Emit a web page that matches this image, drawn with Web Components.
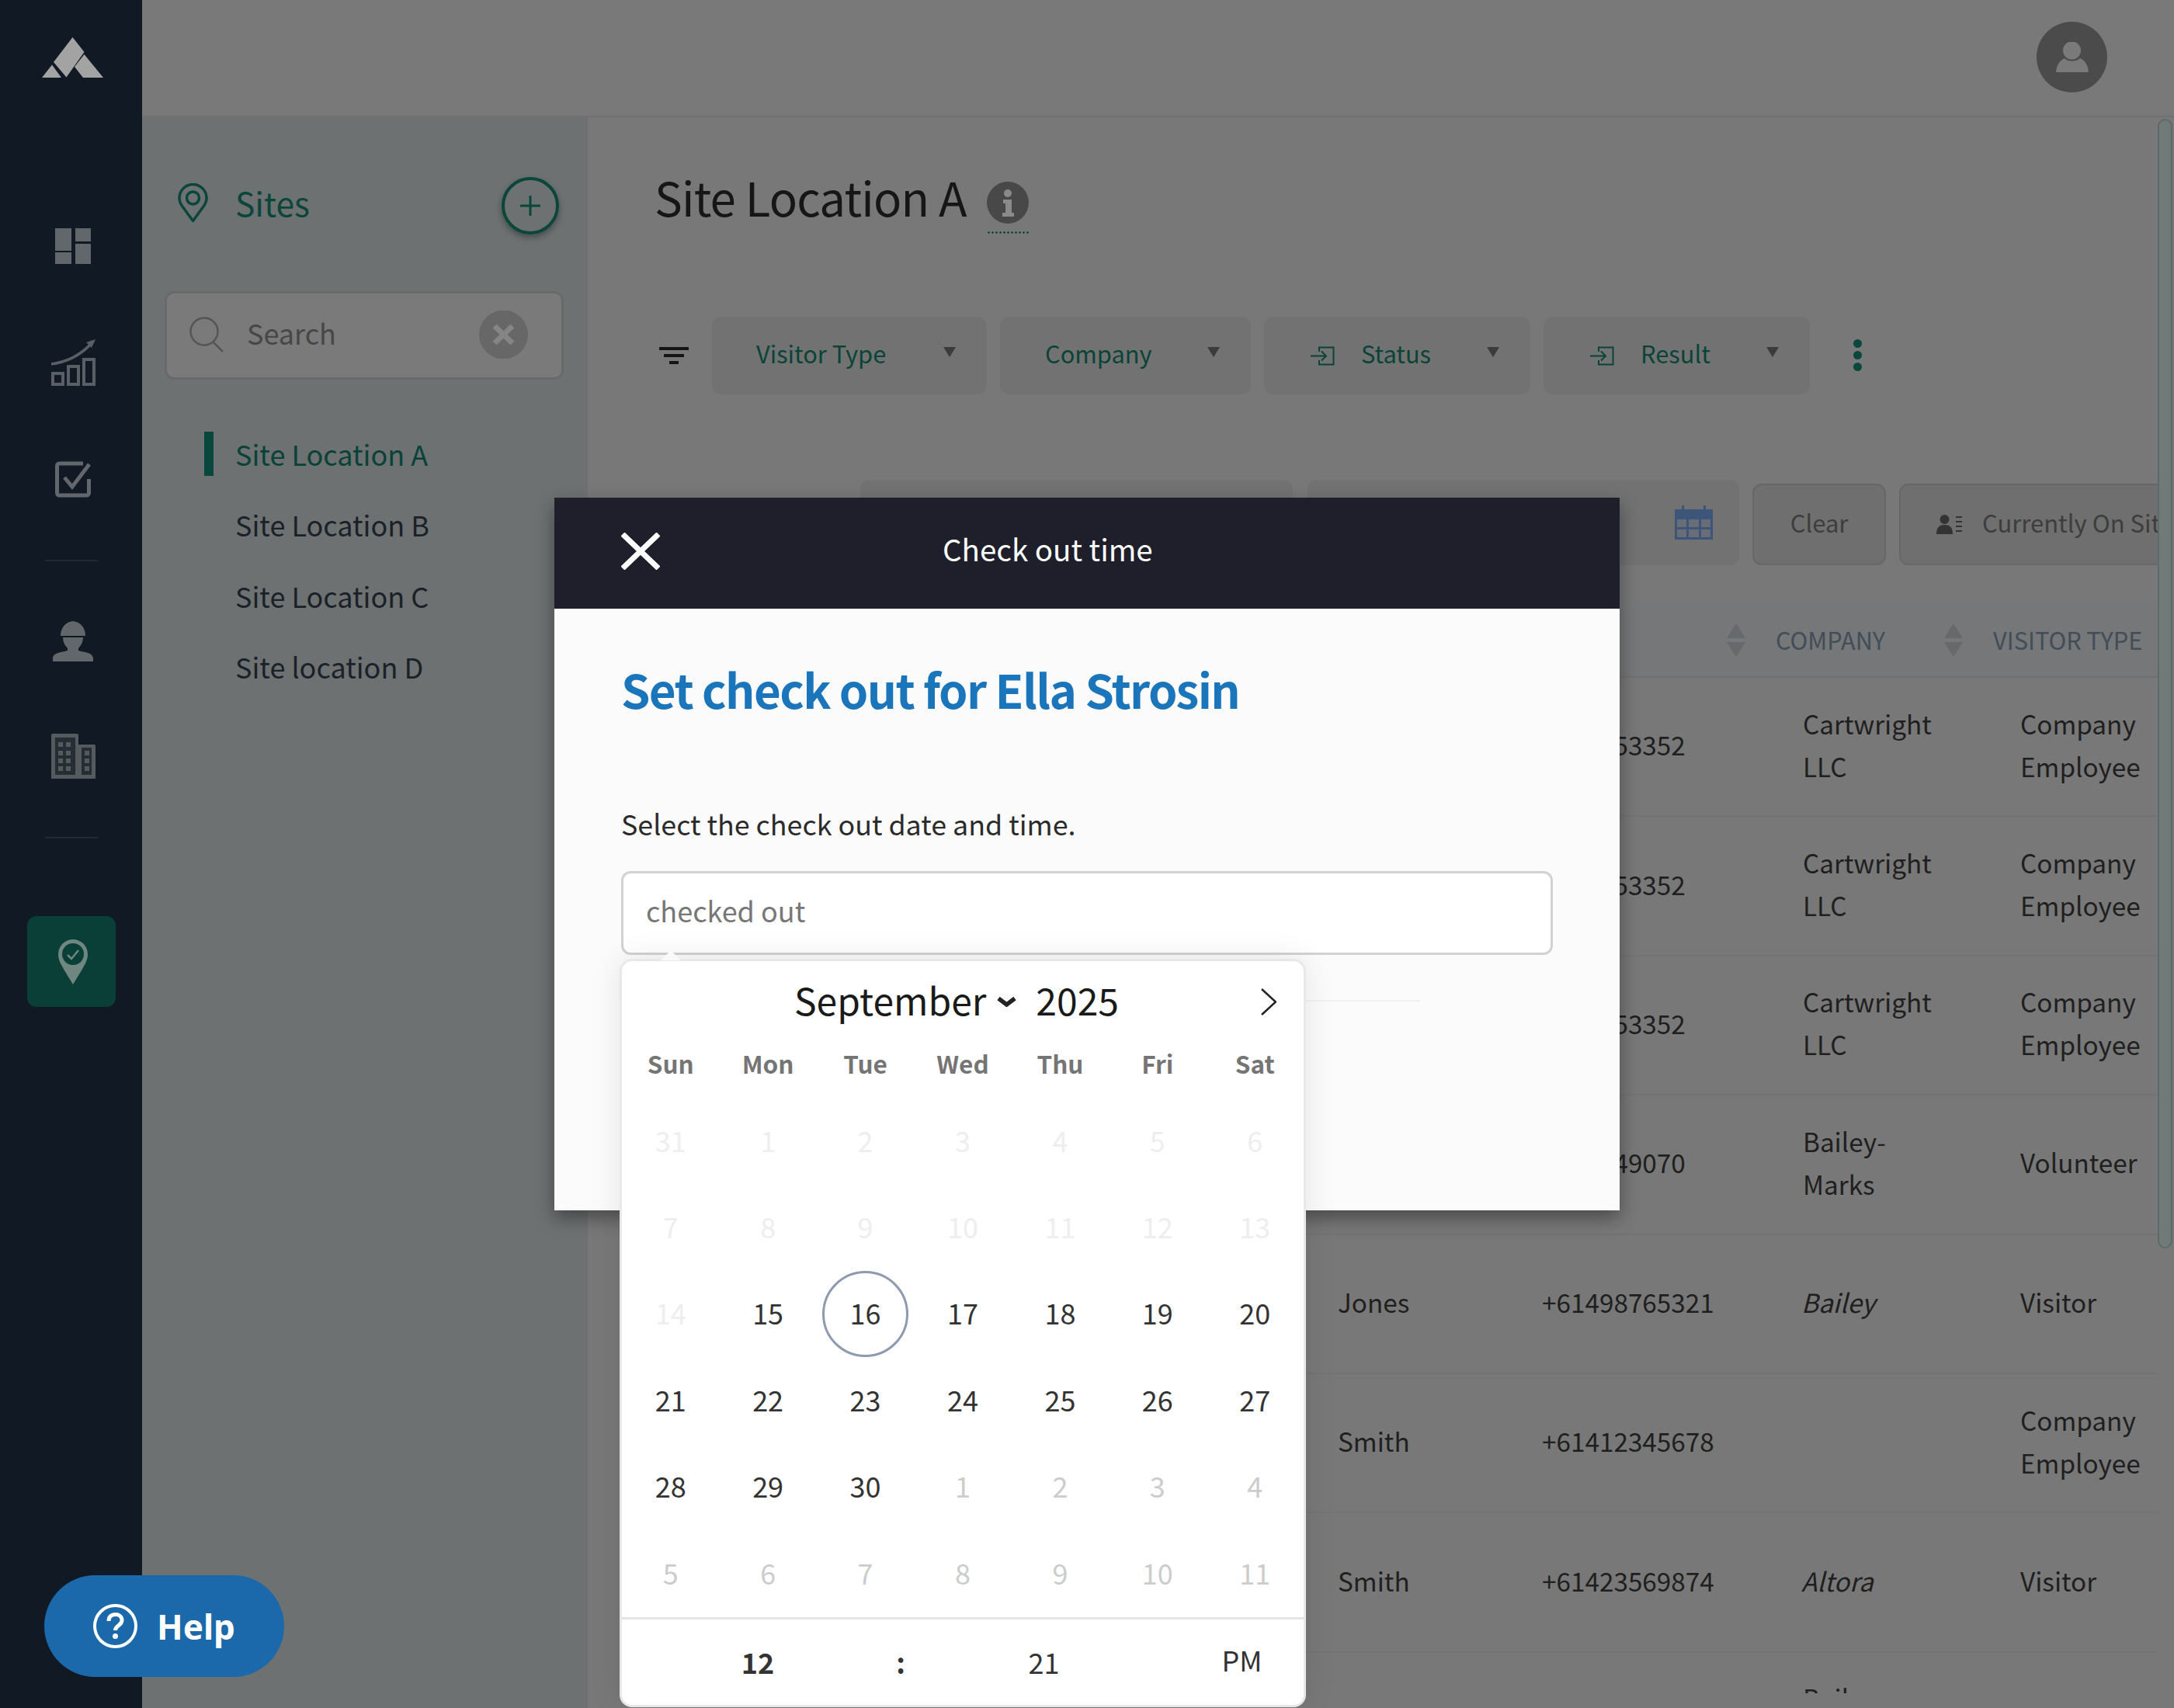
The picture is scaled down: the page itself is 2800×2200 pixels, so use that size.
<!DOCTYPE html>
<html lang="en"><head><meta charset="utf-8"><title>Check out time</title>
<style>
html,body{margin:0;padding:0;width:2800px;height:2200px;overflow:hidden;background:#787878}
body{position:relative;font-family:"Noto Sans CJK JP","Noto Sans",sans-serif;font-size:36px;color:#1b1b1b}
</style></head><body>
<app-shell>
  <nav-rail slot="rail"></nav-rail>
  <top-bar slot="top"></top-bar>
  <sites-panel slot="panel">
    <site-item active>Site Location A</site-item>
    <site-item>Site Location B</site-item>
    <site-item>Site Location C</site-item>
    <site-item>Site location D</site-item>
  </sites-panel>
  <site-content slot="content">
    <filter-chip style="--w:354px;--pl:57px">Visitor Type</filter-chip>
    <filter-chip style="--w:323px;--pl:58px">Company</filter-chip>
    <filter-chip style="--w:343px;--pl:60px" icon>Status</filter-chip>
    <filter-chip style="--w:343px;--pl:60px" icon>Result</filter-chip>
  </site-content>
</app-shell>
<modal-layer>
  <check-out-modal></check-out-modal>
  <help-button>Help</help-button>
</modal-layer>
<script>
const def=(name,css,html,init)=>customElements.define(name,class extends HTMLElement{
  constructor(){super();const s=this.attachShadow({mode:'open'});s.innerHTML=`<style>${css}</style>${html}`;if(init)init(s,this);}
});
const ICON={
logo:`<svg width="79" height="52" viewBox="0 0 79 52" fill="#a3a3a3"><path d="M39.5 0 54.5 19 31.5 51.5 15 32zM0 52 13 35.5 25 52zM54.5 22 79 52H53L42 38z"/></svg>`,
dash:`<svg width="46" height="46" viewBox="0 0 46 46" fill="#62676c"><path d="M0 0h21v29H0zM26 0h20v17H26zM0 31h21v15H0zM26 20h20v26H26z"/></svg>`,
chart:`<svg width="57" height="60" viewBox="0 0 57 60" fill="none" stroke="#5a5f64" stroke-width="4"><path d="M2 44h13v14H2zM22 35h13v23H22zM42 26h13v32H42z"/><path d="M0 32C22 29 38 20 51 6" stroke-width="3.500"/><path d="M57 0 45 4l7 7z" fill="#5a5f64" stroke="none"/></svg>`,
check:`<svg width="46" height="47" viewBox="0 0 46 47" fill="none" stroke="#62676c" stroke-width="5"><path d="M43.500 23V41a3 3 0 0 1-3 3H5.500a3 3 0 0 1-3-3V6a3 3 0 0 1 3-3H36"/><path d="M12 21 22 33 44 4"/></svg>`,
worker:`<svg width="52" height="52" viewBox="0 0 52 52" fill="#62676c"><path d="M10 19C10 8 17 1 26 0c9 1 16 8 16 19z"/><path d="M13 21h26c0 5-2 10-6 14v3c5 2 19 2 19 10v4H0v-4c0-8 14-8 19-10v-3c-4-4-6-9-6-14z"/></svg>`,
bldg:`<svg width="57" height="58" viewBox="0 0 57 58"><path d="M3 3h29v13h22v39H3z" fill="#272d35"/><path fill="#555a5f" fill-rule="evenodd" d="M2 0h31a2 2 0 0 1 2 2v12h20a2 2 0 0 1 2 2v42H0V2a2 2 0 0 1 2-2zm3 5v48h26V5zm34 13v35h13V18z"/><path fill="#555a5f" d="M9 11h6v6H9zM19 11h6v6h-6zM9 22h6v6H9zM19 22h6v6h-6zM9 32h6v6H9zM19 32h6v6h-6zM9 42h6v6H9zM19 42h6v6h-6zM43 22h6v6h-6zM43 32h6v6h-6zM43 42h6v6h-6z"/></svg>`,
pinA:`<svg width="38" height="58" viewBox="0 0 38 58"><path d="M19 0a19 19 0 0 1 19 19c0 9-5 15-8 21L19 58 8 40C5 34 0 28 0 19A19 19 0 0 1 19 0z" fill="#6f8780"/><circle cx="19" cy="19" r="14" fill="#093f36"/><path d="M12 20l5 5 9-11" fill="none" stroke="#6f8780" stroke-width="2.500"/></svg>`,
pin:`<svg width="39" height="51" viewBox="0 0 39 51" fill="none" stroke="#0b463b" stroke-width="3.500"><path d="M19.500 48.500 6 30C3 26 2 23 2 19A17.500 17.500 0 0 1 37 19c0 4-1 7-4 11z" stroke-linejoin="round"/><circle cx="19.500" cy="19" r="8"/></svg>`,
search:`<svg width="44" height="46" viewBox="0 0 44 46" fill="none" stroke="#555" stroke-width="2.500"><circle cx="19" cy="19" r="17.500"/><path d="M31 33 43 45"/></svg>`,
x:`<svg width="63" height="62" viewBox="0 0 63 62"><circle cx="31.500" cy="31" r="31.500" fill="#676767"/><path d="M20 20 43 42M43 20 20 42" stroke="#858585" stroke-width="7"/></svg>`,
info:`<svg width="54" height="54" viewBox="0 0 54 54"><circle cx="27" cy="27" r="27" fill="#484848"/><circle cx="27" cy="15" r="5" fill="#8a8a8a"/><path d="M21 23h11v17h3v5H20v-5h4V28h-3z" fill="#8a8a8a"/></svg>`,
filter:`<svg width="38" height="22" viewBox="0 0 38 22" fill="#151515"><path d="M0 0h38v4H0zM6 9h26v4H6zM13 18h12v4H13z"/></svg>`,
enter:`<svg width="31" height="25" viewBox="0 0 31 25" fill="none" stroke="#0b4338" stroke-width="2"><path d="M11 7V1.500H29.500V23.500H11V18"/><path d="M0 12.500H20M14 6.500l6 6-6 6"/></svg>`,
tri:`<svg width="16" height="13" viewBox="0 0 16 13"><path d="M0 0h16L8 13z" fill="#3b3b3b"/></svg>`,
cal:`<svg width="49" height="44" viewBox="0 0 49 44"><path d="M0 5h49v39H0z" fill="#3d5578"/><path d="M9 0h3v8H9zM37 0h3v8h-3z" fill="#3d5578"/><path d="M3 18h12v10H3zM18 18h13v10H18zM34 18h12v10H34zM3 31h12v10H3zM18 31h13v10H18zM34 31h12v10H34z" fill="#686d76"/></svg>`,
users:`<svg width="33" height="25" viewBox="0 0 33 25" fill="#333"><circle cx="10.500" cy="6" r="6"/><path d="M0 25c0-9 4-12 10.500-12S21 16 21 25z"/><path d="M25 2h8v2h-8zM25 8h8v2h-8zM25 14h8v2h-8zM25 20h8v2h-8z"/></svg>`,
sort:`<svg width="24" height="43" viewBox="0 0 24 43" fill="#666a6d"><path d="M12 0 24 19H0zM12 43 0 24h24z"/></svg>`,
person:`<svg width="42" height="39" viewBox="0 0 42 39" fill="#7a7a7a"><circle cx="20.500" cy="11" r="11.500"/><path d="M0 39c1-10 4-14 11-18 5 5 15 5 20 0 7 4 10 8 11 18z"/></svg>`,
close:`<svg width="50" height="48" viewBox="0 0 50 48" stroke="#fff" stroke-width="7" fill="none"><path d="M2 2 48 46M48 2 2 46"/></svg>`,
next:`<svg width="20" height="35" viewBox="0 0 20 35" fill="none" stroke="#222" stroke-width="2.500"><path d="M1 1 19 17.500 1 34"/></svg>`,
chev:`<svg width="25" height="13" viewBox="0 0 25 13" fill="none" stroke="#222" stroke-width="5.500"><path d="M2 2l10.500 8L23 2"/></svg>`,
help:`<svg width="57" height="57" viewBox="0 0 57 57" fill="none" stroke="#fff"><circle cx="28.500" cy="28.500" r="26.500" stroke-width="4"/><path d="M20 22c0-6 4-8.500 8.500-8.500S37 16 37 21c0 7-8.500 6.500-8.500 13" stroke-width="5"/><circle cx="28.500" cy="41.500" r="3.500" fill="#fff" stroke="none"/></svg>`
};

def('app-shell',`:host{display:flex;width:2800px;height:2200px}
.r{flex:1;display:flex;flex-direction:column;min-width:0}.b{flex:1;display:flex;min-height:0}`,
`<slot name="rail"></slot><div class="r"><slot name="top"></slot><div class="b"><slot name="panel"></slot><slot name="content"></slot></div></div>`);

def('nav-rail',`:host{display:flex;flex-direction:column;align-items:center;width:183px;height:2200px;background:#111a24;box-sizing:border-box;padding-top:48px;flex:none}
svg{display:block;margin-left:5px}
.d{width:68px;height:2px;background:#1f2a35}
.a{width:114px;height:117px;border-radius:12px;background:#093f36;display:flex;align-items:center;justify-content:center}
.a svg{margin-left:4px}`,
`${ICON.logo.replace('<svg','<svg style="margin-left:4px"')}
<div style="height:194px"></div>${ICON.dash}<div style="height:97px"></div>${ICON.chart}<div style="height:97px"></div>${ICON.check}
<div style="height:80px"></div><div class="d"></div><div style="height:77px"></div>${ICON.worker}<div style="height:93px"></div>${ICON.bldg}
<div style="height:75px"></div><div class="d"></div><div style="height:100px"></div><div class="a">${ICON.pinA}</div>`);

def('top-bar',`:host{display:flex;justify-content:flex-end;align-items:center;height:151px;box-sizing:border-box;padding:0 86px 2px 0;background:#797979;border-bottom:2px solid #707070;flex:none}
.a{width:91px;height:91px;border-radius:50%;background:#4b4b4b;display:flex;align-items:center;justify-content:center}`,
`<div class="a">${ICON.person}</div>`);

def('sites-panel',`:host{display:block;width:574px;flex:none;background:#6d7171;color:#1b2128;box-sizing:border-box}
.h{display:flex;align-items:center;height:76px;margin:76px 37px 0 46px}
.h>svg{margin-top:-8px}
.t{margin-left:35px;font-size:42.500px;line-height:76px;color:#0b463b;margin-top:-8px}
.p{margin-left:auto;width:74px;height:74px;box-sizing:border-box;border-radius:50%;border:4px solid #0b463b;box-shadow:0 4px 8px rgba(0,0,0,.35);display:flex;align-items:center;justify-content:center}
.p svg{display:block}
.s{display:flex;align-items:center;margin:72px 0 0 29px;width:514px;height:114px;box-sizing:border-box;border:3px solid #696969;border-radius:12px;background:#7a7a7a;padding:0 43px 2px 29px}
.s span{margin-left:30px;font-size:36px;color:#474747;flex:1;margin-top:-6px}
.s svg{display:block}
.l{margin-top:51px}`,
`<div class="h">${ICON.pin}<span class="t">Sites</span><div class="p"><svg width="26" height="26" viewBox="0 0 26 26" stroke="#0b463b" stroke-width="3"><path d="M13 0v26M0 13h26"/></svg></div></div>
<div class="s">${ICON.search}<span>Search</span>${ICON.x}</div><div class="l"><slot></slot></div>`);

def('site-item',`:host{display:flex;align-items:center;height:91.500px;padding-left:80px;font-size:36px;color:#1b2128;line-height:54px}
.b{width:12px;height:57px;margin-right:28px;flex:none;margin-top:-2px}
.x{margin-top:-4px}
:host([active]){color:#0a4238}:host([active]) .b{background:#09463b}`,
`<span class="b"></span><span class="x"><slot></slot></span>`);

def('filter-chip',`:host{display:flex;align-items:center;height:100px;width:var(--w);box-sizing:border-box;padding:0 40px 0 var(--pl);border-radius:12px;background:#727272;color:#0b4338;font-size:30.800px;flex:none}
svg{display:block}.i{display:none;margin-right:34px}:host([icon]) .i{display:block}
.t{margin-left:auto;margin-top:-10px}.s{margin-top:-8px}`,
`<span class="i">${ICON.enter}</span><span class="s"><slot></slot></span><span class="t">${ICON.tri}</span>`);

const ROWS=[
['', '+610053352','Cartwright LLC','Company Employee'],
['', '+610053352','Cartwright LLC','Company Employee'],
['', '+610053352','Cartwright LLC','Company Employee'],
['', '+610049070','Bailey-Marks','Volunteer'],
['Jones','+61498765321','<i>Bailey</i>','Visitor'],
['Smith','+61412345678','','Company Employee'],
['Smith','+61423569874','<i>Altora</i>','Visitor'],
['', '','Bailey-Marks','Volunteer']];

def('site-content',`:host{display:flex;flex:1;min-width:0;background:#787878}
.m{width:2022px;height:2030px;overflow:hidden;flex:none;box-sizing:border-box;padding-left:89px}
.ti{display:flex;align-items:center;height:106px;margin-top:54px}
h1{margin:0;font-weight:400;font-size:60px;line-height:72px;color:#161616;letter-spacing:-.8px;margin-top:-10px;margin-left:-3px}
.in{margin-left:26px;padding-bottom:13px;margin-top:18px;background:radial-gradient(circle,#0b463b 1px,transparent 1.500px) 0 100%/5px 3px repeat-x}
.in svg{display:block}
.f{display:flex;align-items:center;gap:17px;margin:97px 0 0 3px;height:100px}
.f>svg{margin-right:13px}
.k{margin-left:39px;display:flex;flex-direction:column;gap:4px;margin-top:-2px}.k i{width:11px;height:11px;border-radius:50%;background:#0a483e}
.d{display:flex;align-items:flex-end;margin:110px 0 0 262px;width:1900px}
.bx{height:110px;background:#727272;border-radius:12px;flex:none;box-sizing:border-box;display:flex;align-items:center;justify-content:flex-end}
.bt{height:105px;box-sizing:border-box;background:#6f6f6f;border:2px solid #676767;border-radius:12px;color:#3d3d3d;font-size:31px;display:flex;align-items:center;flex:none}
.bt span{margin-top:-6px}
.tb{margin-top:50px;width:1933px}
.th,.tr{display:grid;grid-template-columns:841px 263px 336px 280px 213px}
.th{height:95px;box-sizing:border-box;background:#757779;border-bottom:2px solid #6e7072;align-items:center;color:#424d58;font-size:30.700px}
.th div{display:flex;align-items:center;justify-content:space-between;padding-right:38px;white-space:nowrap}
.th b{font-weight:400;margin:-3px 0 0 1px}
.tr{height:179.400px;box-sizing:border-box;border-bottom:2px solid #737373;align-items:center;line-height:55px;color:#1f1f1f;font-size:33.300px}
.tr>div{padding:0 0 6px 36px}
.tr>.c{padding-right:70px}
.tr i{margin-left:-2px}
.ph{white-space:nowrap}
.sb{width:19px;height:1455px;margin:2px 2px 0 0;box-sizing:border-box;background:#707a78;border:2px solid #5f6a68;border-radius:10px;flex:none}`,
`<div class="m">
<div class="ti"><h1>Site Location A</h1><span class="in">${ICON.info}</span></div>
<div class="f">${ICON.filter}<slot></slot><span class="k"><i></i><i></i><i></i></span></div>
<div class="d"><div class="bx" style="width:557px;margin-right:19px"></div>
<div class="bx" style="width:556px;margin-right:17px;padding-right:34px">${ICON.cal}</div>
<div class="bt" style="width:172px;margin-right:17px;justify-content:center"><span>Clear</span></div>
<div class="bt" style="width:500px;padding-left:46px">${ICON.users}<span style="margin-left:26px;white-space:nowrap">Currently On Site</span></div></div>
<div class="tb"><div class="th"><div></div><div></div><div style="justify-content:flex-end">${ICON.sort}</div><div><b>COMPANY</b>${ICON.sort}</div><div><b>VISITOR TYPE</b></div></div>
${ROWS.map(r=>`<div class="tr"><div></div><div>${r[0]}</div><div class="ph">${r[1]}</div><div class="c">${r[2]}</div><div>${r[3]}</div></div>`).join('')}
</div></div><div class="sb"></div>`);

def('date-picker',`:host{display:block;position:absolute;left:-5px;top:110px;width:884px;height:964px;box-sizing:border-box;background:#fff;border:3px solid #e8e8e8;border-radius:16px;box-shadow:0 0 40px rgba(0,0,0,.09);color:#333}
:host::before{content:"";position:absolute;left:50px;top:-14px;border:13px solid transparent;border-top:0;border-bottom:13px solid #fafafa}
.m{display:flex;align-items:center;height:103px;box-sizing:border-box;padding:0 35px 5px 222px;font-size:48px;color:#1a1a1a}
.m svg{display:block}.m .c{margin:6px 25px 0 14px}.m .n{margin-left:auto;margin-top:7px}
.g{display:grid;grid-template-columns:repeat(7,1fr);text-align:center}
.w{height:57px;line-height:57px;font-size:31.500px;font-weight:700;color:#757575}
.ds{margin-top:16.500px;grid-auto-rows:111.400px}
.ds div{display:flex;align-items:center;justify-content:center;position:relative;font-size:36px;box-sizing:border-box;padding-bottom:5px}
.o{color:#eee}.e{color:#ccc}
.t{position:relative}.t::after{content:"";position:absolute;left:50%;top:50%;width:111px;height:111px;box-sizing:border-box;margin:-55.500px 0 0 -56px;border:3px solid #8e9ab0;border-radius:50%}
.tm{display:flex;align-items:center;border-top:3px solid #e6e6e6;height:108px;box-sizing:content-box;text-align:center;font-size:36px}
.tm b{font-weight:700}`,
`<div class="m"><span>September</span><span class="c">${ICON.chev}</span><span>2025</span><span class="n">${ICON.next}</span></div>
<div class="g w"><span>Sun</span><span>Mon</span><span>Tue</span><span>Wed</span><span>Thu</span><span>Fri</span><span>Sat</span></div>
<div class="g ds"></div>
<div class="tm"><b style="width:350px">12</b><b style="width:18px">:</b><span style="width:351px">21</span><span style="width:159px;margin-top:-6px">PM</span></div>`,
s=>{const d=[];
for(const n of [31,1,2,3,4,5,6,7,8,9,10,11,12,13,14])d.push(['o',n]);
for(let n=15;n<=30;n++)d.push([n==16?'t':'',n]);
for(const n of [1,2,3,4,5,6,7,8,9,10,11])d.push(['e',n]);
s.querySelector('.ds').innerHTML=d.map(x=>`<div class="${x[0]}">${x[1]}</div>`).join('');});

def('check-out-modal',`:host{display:block;position:absolute;left:714px;top:641px;width:1372px;height:918px;background:#fbfbfb;box-shadow:0 10px 22px rgba(0,0,0,.38)}
.h{display:flex;align-items:center;height:143px;box-sizing:border-box;padding:0 0 6px 86px;background:#1e1f2a;color:#fff;font-size:38.500px}
.h svg{display:block}.h span{margin-left:364px;margin-top:-8px}
.b{padding:63px 86px 0}
h2{margin:0;font-size:60px;line-height:80px;font-weight:700;color:#1b75bb;letter-spacing:-1.600px}
p{margin:106px 0 0;font-size:35.800px;line-height:54px;color:#2b2b2b}
.i{position:relative;margin-top:35px;height:108px;box-sizing:border-box;border:3px solid #d2d2d2;border-radius:12px;background:#fff;padding:0 0 0 29px;display:flex;align-items:center;font-size:36px;color:#777}
.i>span{margin-top:-8px}
hr{width:1029px;height:2px;background:#f1f1f1;border:0;margin:58px 0 0}`,
`<div class="h">${ICON.close}<span>Check out time</span></div>
<div class="b"><h2>Set check out for Ella Strosin</h2><p>Select the check out date and time.</p>
<div class="i"><span>checked out</span><date-picker></date-picker></div><hr></div>`);

def('modal-layer',`:host{display:block;position:absolute;left:0;top:0;width:2800px;height:2200px}`,`<slot></slot>`);

def('help-button',`:host{position:absolute;left:57px;top:2029px;width:309px;height:131px;border-radius:66px;background:#1b69ab;color:#fff;display:flex;align-items:center;box-sizing:border-box;padding-left:63px;font-family:"Noto Sans",sans-serif;font-weight:700;font-size:44px}
svg{display:block;margin-right:25px}`,
`${ICON.help}<span><slot></slot></span>`);
</script>
</body></html>
